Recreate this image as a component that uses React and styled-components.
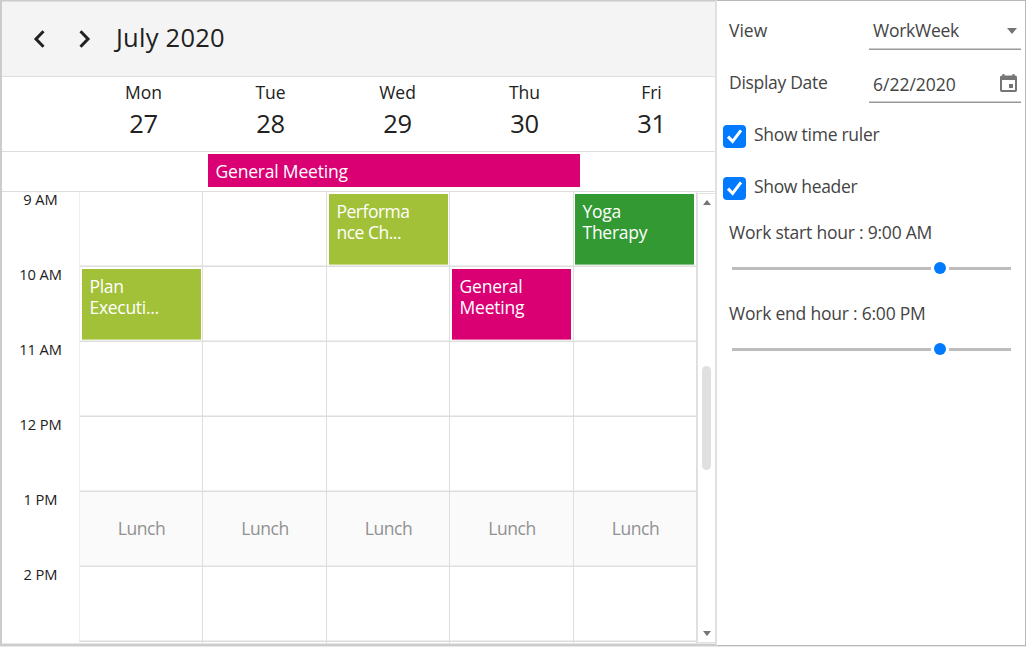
import React from "react";
import styled, { createGlobalStyle } from "styled-components";

const Global = createGlobalStyle`
  * { box-sizing: border-box; }
  body { margin: 0; background: #fff; font-family: "Open Sans", "Noto Sans", sans-serif; color: #212121; overflow: hidden; }
`;

const Page = styled.div`
  width: 1026px; height: 647px; display: flex; background: #fff;
  align-items: flex-start; border-bottom: 1px solid #e8e8e8;
`;
const Calendar = styled.section`
  width: 717px; height: 646px; display: flex; flex-direction: column;
  border: 2px solid #cccccc; border-top-width: 1px; border-right-color: #e0e0e0;
`;
const Header = styled.header`
  height: 76px; padding: 0 0 1px 23px; display: flex; align-items: center; flex: none;
  background: #f4f4f4; border-bottom: 1px solid #dedede; border-top: 1px solid #dedede;
`;
const NavButton = styled.button`
  width: 28px; height: 28px; margin-right: 16.5px; padding: 0; border: 0; background: none;
  display: flex; align-items: center; justify-content: center; color: #212121;
`;
const Title = styled.h1`
  margin: 0 0 3px 2px; font-size: 25.5px; font-weight: 400; line-height: 36px; letter-spacing: 0.25px; white-space: nowrap;
`;
const DayHeaders = styled.div`
  height: 75px; flex: none; padding-left: 78px; display: grid; grid-template-columns: repeat(5, 127px);
  border-bottom: 1px solid #dedede; overflow: hidden;
`;
const DayHeader = styled.div`
  padding-top: 3px; display: flex; flex-direction: column; align-items: center;
`;
const DayName = styled.span`
  font-size: 17.5px; line-height: 24px;
`;
const DayNumber = styled.span`
  margin-top: 1px; font-size: 25.5px; line-height: 36px; letter-spacing: -0.4px;
`;
const AllDay = styled.div`
  height: 40px; flex: none; padding: 2px 0 0 206px; border-bottom: 1px solid #dedede;
`;
const AllDayEvent = styled.div`
  width: 372px; height: 33px; padding: 5px 7.5px; background: #da0073; color: #fff;
  font-size: 17.5px; line-height: 25px; letter-spacing: -0.2px; white-space: nowrap;
`;
const Body = styled.div`
  flex: 1; min-height: 0; display: flex; overflow: hidden; box-shadow: inset 0 -1px #e8e8e8;
`;
const TimeRuler = styled.div`
  width: 78px; flex: none; border-right: 1px solid #eeeeee;
`;
const TimeLabel = styled.div`
  height: 75px; font-size: 14.7px; line-height: 15px; text-align: center; letter-spacing: -0.1px;
`;
const Grid = styled.div`
  width: 617px; flex: none; display: grid;
  grid-template-columns: 123px 124px 123px 124px 123px; grid-auto-rows: 75px;
`;
const Slot = styled.div`
  padding: 2px; border-right: 1px solid #dedede; border-bottom: 1px solid #dedede;
  box-shadow: inset 0 -1px #eeeeee;
  ${(p) => p.$lunch && `background: #fafafa; display: flex; align-items: center; justify-content: center;
    color: #919191; font-size: 17.5px; letter-spacing: -0.4px; padding: 0 0 2px 1px;`}
`;
const Event = styled.div`
  width: 119px; height: 71px; margin-left: ${(p) => p.$shift || 0}px; padding: 7px 7.5px; background: ${(p) => p.$color}; color: #fff;
  font-size: 17.5px; line-height: 21px; letter-spacing: ${(p) => p.$ls || 0}px; white-space: pre-line;
  box-shadow: inset 0 -1px rgba(255, 255, 255, 0.4);
`;
const ScrollBar = styled.div`
  width: 18px; height: 450px; margin-top: 1px; padding: 6px 0 6px 0; flex: none; display: flex; flex-direction: column;
  align-items: center; border: 1px solid #e2e2e2; border-right: 0; background: #fff;
`;
const Arrow = styled.span`
  width: 0; height: 0; border: 4.5px solid transparent;
  ${(p) => (p.$up ? "border-top: 0; border-bottom: 5px solid #757575;" : "border-bottom: 0; border-top: 5px solid #757575; margin-top: auto;")}
`;
const Thumb = styled.div`
  width: 9px; height: 104px; margin-top: 161px; border-radius: 5px; background: #e0e0e0;
`;

const Panel = styled.aside`
  width: 309px; height: 646px; padding: 0 4px 0 6px; display: flex; flex-direction: column;
  border: 1px solid #b9b9b9; border-left: 0; color: #444;
  font-size: 17.5px; white-space: nowrap;
`;
const Field = styled.div`
  display: flex; justify-content: space-between; height: ${(p) => p.$height}px; padding-left: 6px;
`;
const Label = styled.span`
  padding-top: ${(p) => p.$top || 0}px; line-height: 24px; letter-spacing: ${(p) => p.$ls || 0}px;
`;
const Input = styled.div`
  width: 152px; height: 100%; padding: ${(p) => p.$top}px ${(p) => p.$right}px 0 4px; display: flex; justify-content: space-between;
  line-height: 24px; letter-spacing: ${(p) => p.$ls || 0}px; border-bottom: 1px solid #999; box-shadow: inset 0 -1px #ccc;
`;
const Caret = styled.span`
  margin-top: 10px; width: 0; height: 0; border: 5.5px solid transparent; border-top: 6px solid #757575; border-bottom: 0;
`;
const CheckRow = styled.label`
  height: 24px; margin-top: ${(p) => p.$gap}px; display: flex; gap: 8px; line-height: 20px; letter-spacing: ${(p) => p.$ls || 0}px;
`;
const CheckBox = styled.span`
  width: 23px; height: 23px; margin-top: 1px; flex: none; border-radius: 4px; background: #007bff; display: flex;
`;
const SliderLabel = styled.div`
  margin: ${(p) => p.$gap}px 0 0 6px; line-height: 24px; letter-spacing: ${(p) => p.$ls || 0}px;
`;
const Slider = styled.div`
  margin: 18px 0 0 9px; height: 12px; display: flex; align-items: center; gap: 3px;
`;
const Track = styled.span`
  width: ${(p) => p.$width}px; height: 3px; background: #bdbdbd;
`;
const Knob = styled.span`
  width: 12px; height: 12px; border-radius: 50%; background: #007bff;
`;
const DateIcon = styled.svg`
  margin-top: 2px;
`;

const Check = () => (
  <svg width="23" height="23" viewBox="0 0 23 23" fill="none" stroke="#fff" strokeWidth="3">
    <path d="M5 11.6l4.6 4.8L18 5.4" />
  </svg>
);
const Chevron = ({ d }) => (
  <svg width="28" height="28" viewBox="0 0 28 28" fill="none" stroke="currentColor" strokeWidth="3">
    <path d={d} />
  </svg>
);
const CalendarIcon = () => (
  <DateIcon width="17" height="18" viewBox="0 0 17 18" fill="#757575">
    <path fillRule="evenodd" d="M2.500 0h2v1.500h8V0h2v1.500h.700a1.800 1.800 0 0 1 1.800 1.800v12.900a1.800 1.800 0 0 1-1.800 1.800H1.800a1.800 1.800 0 0 1-1.800-1.800V3.300a1.800 1.800 0 0 1 1.800-1.800h.700zM2 6V16h13V6z" />
    <rect x="9" y="10" width="4" height="4" />
  </DateIcon>
);

const days = [["Mon", 27], ["Tue", 28], ["Wed", 29], ["Thu", 30], ["Fri", 31]];
const hours = ["9 AM", "10 AM", "11 AM", "12 PM", "1 PM", "2 PM"];
const events = {
  "0-2": { text: "Performa\nnce Ch...", color: "#a2c139", ls: -0.5 },
  "0-4": { text: "Yoga\nTherapy", color: "#339933", ls: -0.25, shift: -1 },
  "1-0": { text: "Plan\nExecuti...", color: "#a2c139", ls: -0.3 },
  "1-3": { text: "General\nMeeting", color: "#da0073", ls: -0.2 },
};

export default function App() {
  return (
    <Page>
      <Global />
      <Calendar>
        <Header>
          <NavButton aria-label="Previous"><Chevron d="M18.500 6.300L11 14l7.500 7.700" /></NavButton>
          <NavButton aria-label="Next"><Chevron d="M10.500 6.300L18 14L10.500 21.700" /></NavButton>
          <Title>July 2020</Title>
        </Header>
        <DayHeaders>
          {days.map(([name, n]) => (
            <DayHeader key={name}><DayName>{name}</DayName><DayNumber>{n}</DayNumber></DayHeader>
          ))}
        </DayHeaders>
        <AllDay><AllDayEvent>General Meeting</AllDayEvent></AllDay>
        <Body>
          <TimeRuler>{hours.map((h) => <TimeLabel key={h}>{h}</TimeLabel>)}</TimeRuler>
          <Grid>
            {Array.from({ length: 35 }, (_, i) => {
              const row = Math.floor(i / 5);
              const event = events[`${row}-${i % 5}`];
              return (
                <Slot key={i} $lunch={row === 4}>
                  {row === 4 && "Lunch"}
                  {event && (
                    <Event $color={event.color} $ls={event.ls} $shift={event.shift}>{event.text}</Event>
                  )}
                </Slot>
              );
            })}
          </Grid>
          <ScrollBar><Arrow $up /><Thumb /><Arrow /></ScrollBar>
        </Body>
      </Calendar>
      <Panel>
        <Field $height={49}>
          <Label $top={17}>View</Label>
          <Input $top={17} $right={4} $ls={-0.25}>WorkWeek<Caret /></Input>
        </Field>
        <Field $height={53}>
          <Label $top={20} $ls={-0.3}>Display Date</Label>
          <Input $top={22} $right={4}>6/22/2020<CalendarIcon /></Input>
        </Field>
        <CheckRow $gap={21} $ls={-0.27}><CheckBox><Check /></CheckBox>Show time ruler</CheckRow>
        <CheckRow $gap={28} $ls={-0.33}><CheckBox><Check /></CheckBox>Show header</CheckRow>
        <SliderLabel $gap={20} $ls={-0.22}>Work start hour : 9:00 AM</SliderLabel>
        <Slider><Track $width={199} /><Knob /><Track $width={62} /></Slider>
        <SliderLabel $gap={27} $ls={-0.22}>Work end hour : 6:00 PM</SliderLabel>
        <Slider><Track $width={199} /><Knob /><Track $width={62} /></Slider>
      </Panel>
    </Page>
  );
}
